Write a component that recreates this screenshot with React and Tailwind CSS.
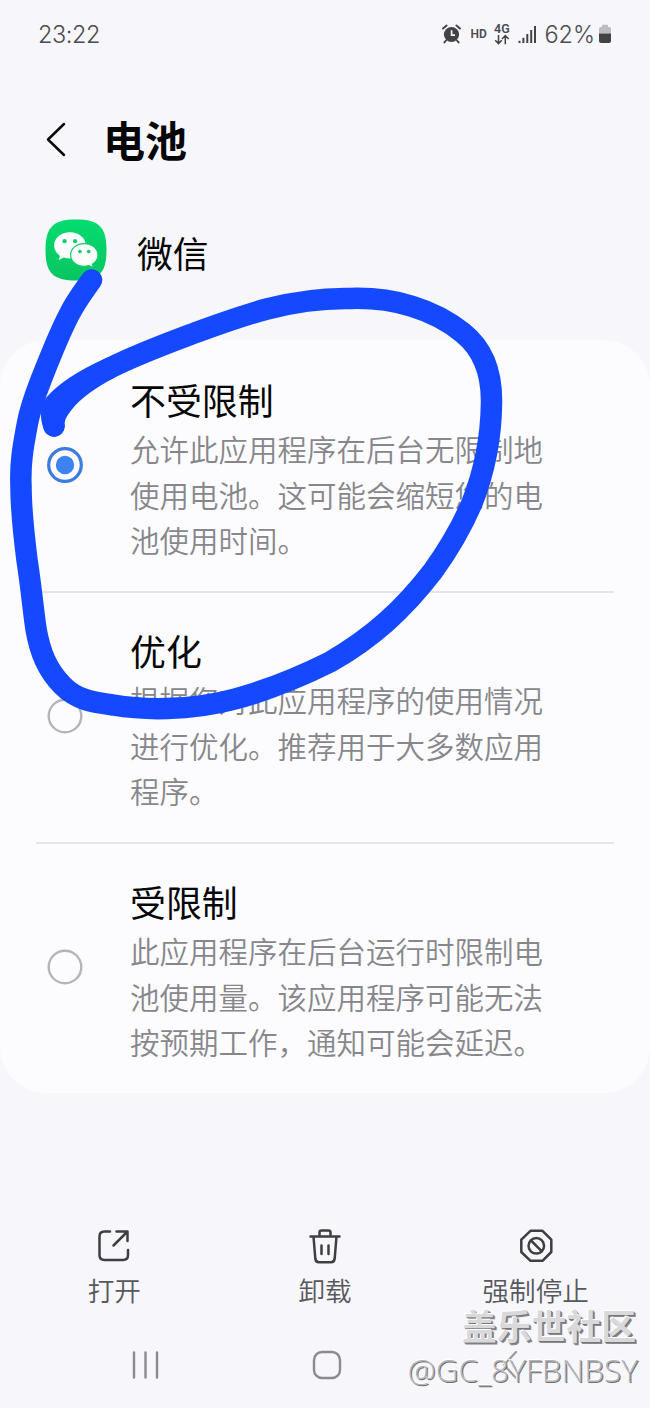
import React, { useState } from 'react';

const OPTIONS = [
  {
    id: 'unrestricted',
    title: '不受限制',
    lines: ['允许此应用程序在后台无限制地', '使用电池。这可能会缩短您的电', '池使用时间。'],
  },
  {
    id: 'optimized',
    title: '优化',
    lines: ['根据您对此应用程序的使用情况', '进行优化。推荐用于大多数应用', '程序。'],
  },
  {
    id: 'restricted',
    title: '受限制',
    lines: ['此应用程序在后台运行时限制电', '池使用量。该应用程序可能无法', '按预期工作，通知可能会延迟。'],
  },
];

const StatusBar = () => (
  <div className="flex h-[68px] items-center justify-between pl-[38px] pr-[38px] font-['Inter',sans-serif] text-[#4b4b4e]">
    <span className="pt-px text-[23.5px] font-[350] leading-none tracking-[-0.4px]">23:22</span>
    <div className="flex items-center">
      {/* Alarm */}
      <svg width="19" height="20" viewBox="0 0 19 20" fill="none">
        <circle cx="9.5" cy="10.5" r="7.6" fill="#434346" />
        <path d="M1 4.6 4.6 1.6M18 4.6 14.4 1.6M4 16.5 2.4 18.4M15 16.5l1.6 1.9" stroke="#434346" strokeWidth="1.9" strokeLinecap="round" />
        <path d="M9.6 6.2v4.9h3.4" stroke="#f6f6fa" strokeWidth="1.7" />
      </svg>
      <span className="ml-[9px] w-[16px] font-['Roboto',sans-serif] text-[12px] font-semibold leading-none">HD</span>
      {/* Network type */}
      <div className="ml-[7px] flex w-[17px] flex-col items-center">
        <span className="font-['Roboto',sans-serif] text-[12.5px] font-semibold leading-[11px]">4G</span>
        <svg width="16" height="11" viewBox="0 0 16 11" fill="none" stroke="#434346" strokeWidth="1.5">
          <path d="M4.5 1v8.4M1.2 6.2l3.3 3.4 3.3-3.4M11.3 10.2V1.8M8 5l3.3-3.4L14.6 5" />
        </svg>
      </div>
      {/* Signal */}
      <svg className="ml-[8px]" width="19" height="19" viewBox="0 0 19 19" fill="#434346">
        <rect x="0.5" y="15.8" width="2" height="2.2" />
        <rect x="4.4" y="12.8" width="2" height="5.2" />
        <rect x="8.3" y="9" width="2" height="9" />
        <rect x="12.2" y="5" width="2" height="13" />
        <rect x="16" y="1" width="2" height="17" />
      </svg>
      <span className="ml-[7px] pt-px text-[23.5px] font-[350] leading-none">62%</span>
      {/* Battery */}
      <svg className="ml-[3px]" width="14" height="20" viewBox="0 0 14 20">
        <path d="M4 3V1.5Q4 .7 4.8.7h4.4q.8 0 .8.8V3h1.3Q13 3 13 4.7V9.6H1V4.7Q1 3 2.7 3Z" fill="#bdbdc0" />
        <path d="M1 9.4h12v7.6q0 2-2 2H3q-2 0-2-2Z" fill="#434346" />
      </svg>
    </div>
  </div>
);

const WeChatIcon = () => (
  <svg width="62" height="62" viewBox="0 0 62 62">
    <defs>
      <linearGradient id="wechat" x1="0" y1="0" x2="0" y2="1">
        <stop offset="0" stopColor="#05dc70" />
        <stop offset="1" stopColor="#07c561" />
      </linearGradient>
    </defs>
    <path d="M31 .5C54 .5 61.5 8 61.5 31S54 61.5 31 61.5.5 54 .5 31 8 .5 31 .5Z" fill="url(#wechat)" />
    <path d="M25 13.3c-9 0-15.9 5.9-15.9 13.2 0 4.3 2.3 7.9 5.9 10.3l-1.4 4.3 5.2-2.6c2 .6 4 .9 6.2.9 8.9 0 15.8-5.7 15.8-12.9S34 13.3 25 13.3Z" fill="#fff" />
    <path d="M39.3 24.6c-7.7 0-13.7 5-13.7 11.3s6 11.4 13.7 11.4c1.6 0 3.2-.3 4.7-.7l4.5 2.4-1.2-3.8c3.4-2.1 5.7-5.4 5.7-9.3 0-6.3-6-11.3-13.7-11.3Z" fill="#fff" stroke="#08ce67" strokeWidth="1.2" />
    <g fill="#08cf68">
      <circle cx="19.6" cy="22.2" r="2.1" />
      <circle cx="30.1" cy="22.2" r="2.1" />
      <circle cx="35" cy="32.6" r="1.8" />
      <circle cx="43.7" cy="32.6" r="1.8" />
    </g>
  </svg>
);

const Radio = ({ checked }) => (
  <svg className="shrink-0" width="38" height="38" viewBox="0 0 38 38" fill="none">
    <circle cx="19" cy="19" r="16.3" stroke={checked ? '#3c7be2' : '#b5b5b9'} strokeWidth={checked ? 3.2 : 2.4} />
    {checked && <circle cx="19" cy="19" r="9.2" fill="#3d82f2" />}
  </svg>
);

const Option = ({ option, checked, last, onSelect }) => (
  <div onClick={onSelect} className="flex h-[251px] flex-col">
    <div className="flex h-[251px] shrink-0">
      <div className="flex w-[130px] shrink-0 items-center pb-px pl-[46px]">
        <Radio checked={checked} />
      </div>
      <div className="pt-[33px]">
        <h2 className="text-[35.9px] leading-[53px] text-[#060607]">{option.title}</h2>
        <p className="text-[29.5px] font-[350] leading-[45.7px] text-[#87878b]">
          {option.lines.map((line) => (
            <span key={line} className="block whitespace-nowrap">{line}</span>
          ))}
        </p>
      </div>
    </div>
    {!last && <div className="mx-9 h-[2px] shrink-0 bg-[#e4e4ea]" />}
  </div>
);

const Action = ({ label, children }) => (
  <button className="flex flex-col items-center">
    <svg width="38" height="38" viewBox="0 0 38 38" fill="none" stroke="#3f3f42" strokeWidth="2.5" strokeLinecap="round" strokeLinejoin="round">
      {children}
    </svg>
    <span className="mt-[5px] text-[26.6px] font-[350] leading-[40px] text-[#58585b]">{label}</span>
  </button>
);

// Freehand pen mark circling the first option
const PenMark = () => (
  <svg className="pointer-events-none absolute left-0 top-0" width="650" height="800" viewBox="0 0 650 800" fill="none" stroke="#1549ff" strokeWidth="21.5" strokeLinecap="round" strokeLinejoin="round">
    <path d="M91.5 280C83 292 76 301 69.5 314C60 332 50 357 41 380C34 398 30 410 27.5 423C23 447 20 463 21 486C21 512 24 536 27 560C32 593 33 609 36 629C40 652 47 670 63 686C77 700 92 702 113 705C131 708 150 709 167 708.5C190 708 213 705 235 699C268 690 298 678 330 662C372 638 403 610 433 571C451 546 463 524 472 503C483 475 491 444 491.5 403C492 373 483 349 463 333C434 309 393 297 350 298.5C322 298 294 302 267 309C244 315 222 323 200 331C168 343 140 353 110 368C91 378 74 390 64 402C58 410 53 416 54 426" />
    <path d="M110 368C88 378 66 391 55 404Q49 413 54 426" />
  </svg>
);

export default function App() {
  const [selected, setSelected] = useState('unrestricted');

  return (
    <div className="relative flex h-[1408px] w-[650px] flex-col overflow-hidden bg-[#f6f6fb] font-['Noto_Sans_CJK_SC',sans-serif]">
      <StatusBar />

      {/* Header */}
      <header className="flex h-[142px] items-center pl-[44px]">
        <svg width="24" height="38" viewBox="0 0 24 38" fill="none" stroke="#0b0b0c" strokeWidth="2.5" strokeLinecap="round" strokeLinejoin="round">
          <path d="M20 4 4 19.5 20 35" />
        </svg>
        <h1 className="ml-[35px] text-[42px] font-bold leading-[60px] text-[#060607]">电池</h1>
      </header>

      <div className="flex h-[130px] pl-[45px] pt-[9px]">
        <WeChatIcon />
        <span className="ml-[30px] pt-[7px] text-[35.8px] leading-[53px] text-[#060607]">微信</span>
      </div>

      {/* Options */}
      <main className="h-[753px] rounded-[46px] bg-[#fcfcff]">
        {OPTIONS.map((option, i) => (
          <Option
            key={option.id}
            option={option}
            checked={selected === option.id}
            last={i === OPTIONS.length - 1}
            onSelect={() => setSelected(option.id)}
          />
        ))}
      </main>

      {/* Actions */}
      <div className="mt-[134px] grid grid-cols-3 px-[9px]">
        <Action label="打开">
          <path d="M15 4.5H9.5Q4.5 4.5 4.5 9.5V28Q4.5 33 9.5 33H28Q33 33 33 28V23M21.5 4.5H32.5V14M32 5 18.5 18.5" />
        </Action>
        <Action label="卸载">
          <path d="M4.5 9.5H33.5M13.5 9.5V5.5Q13.5 3.5 15.5 3.5H22.5Q24.5 3.5 24.5 5.5V9.5M7.5 9.5 9.3 31.5Q9.7 35.3 13 35.3H25Q28.3 35.3 28.7 31.5L30.5 9.5M15.5 18.5V27M22.5 18.5V27" />
        </Action>
        <Action label="强制停止">
          <path d="M13.5 3.8H25.5L34.3 12.6V25L25.5 33.8H13.5L4.3 25V12.6Z" />
          <circle cx="19.3" cy="18.8" r="7.8" />
          <path d="M14 13.5 24.6 24.1" />
        </Action>
      </div>

      {/* Navigation bar */}
      <nav className="mt-[36px] flex h-[38px] items-center pl-[131px]">
        <svg width="29" height="30" viewBox="0 0 29 30" stroke="#8b8b8d" strokeWidth="2.4" strokeLinecap="round">
          <path d="M3 2.5V27.5M14.5 2.5V27.5M26 2.5V27.5" />
        </svg>
        <svg className="ml-[152px]" width="30" height="30" viewBox="0 0 30 30" fill="none" stroke="#8b8b8d" strokeWidth="2.4">
          <rect x="2" y="2" width="26" height="26" rx="8" />
        </svg>
        <svg className="ml-[159px]" width="18" height="32" viewBox="0 0 18 32" fill="none" stroke="#9b9b9d" strokeWidth="2.2" strokeLinecap="round">
          <path d="M15 3 3 16 15 29" />
        </svg>
      </nav>

      <PenMark />

      {/* Watermark */}
      <div className="pointer-events-none absolute bottom-0 right-[12px] flex flex-col items-end whitespace-nowrap text-[#d9d9dc]">
        <span className="mr-[2px] text-[34.8px] font-bold leading-[44px] [text-shadow:-1px_-1px_0_#ffffff,1px_1px_0_#77777a,2px_2px_0_#8a8a8d]">盖乐世社区</span>
        <span className="h-[61px] font-['Open_Sans',sans-serif] text-[31.6px] font-light leading-[46px] text-[#b4b4b7] [text-shadow:-1px_-1px_0_#ffffff,1px_1px_0_#6f6f72]">@GC_8YFBNBSY</span>
      </div>
    </div>
  );
}
